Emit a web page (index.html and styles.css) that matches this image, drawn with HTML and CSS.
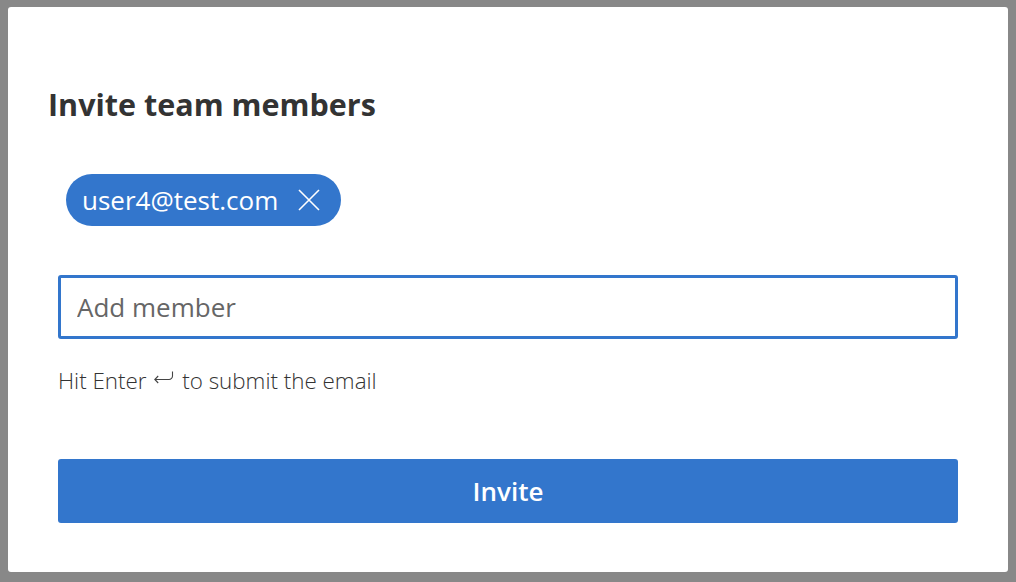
FILE: index.html
```html
<!DOCTYPE html>
<html lang="en">
<head>
<meta charset="utf-8">
<title>Invite team members</title>
<link rel="stylesheet" href="styles.css">
</head>
<body>
<div class="modal">
  <h1 class="title">Invite team members</h1>
  <div class="content">
    <div class="chips">
      <span class="chip">user4@test.com
        <svg class="chip-x" width="22" height="22" viewBox="0 0 22 22" aria-hidden="true"><path d="M1 1L21 21M21 1L1 21" stroke="#fff" stroke-width="1.6" fill="none"/></svg>
      </span>
    </div>
    <input class="field" type="text" placeholder="Add member">
    <p class="hint">Hit Enter <svg class="enter" width="20" height="13" viewBox="0 0 20 13" aria-hidden="true"><path d="M4.2 5L0.8 8.5L4.2 12M0.8 8.5H15A3.5 3.5 0 0 0 18.5 5V0.5" stroke="#444" stroke-width="1.1" fill="none"/></svg> to submit the email</p>
    <button class="btn">Invite</button>
  </div>
</div>
</body>
</html>
```
FILE: styles.css
```css
html, body {
  margin: 0;
  padding: 0;
}
body {
  background: #888888;
  width: 1016px;
  height: 582px;
  padding: 7px 8px 0 8px;
  box-sizing: border-box;
  font-family: "Open Sans", "Noto Sans", sans-serif;
  color: #333;
}
.modal {
  width: 1000px;
  height: 565px;
  background: #fff;
  border-radius: 3px;
  box-sizing: border-box;
}
.title {
  margin: 0;
  padding: 79px 0 0 40px;
  font-size: 30.5px;
  font-weight: 700;
  line-height: 36px;
  color: #333;
}
.content {
  padding: 0 50px;
}
.chips {
  display: flex;
  padding: 52px 0 0 8px;
}
.chip {
  display: inline-flex;
  align-items: center;
  height: 52px;
  border-radius: 26px;
  background: #3376cc;
  color: #fff;
  font-size: 26px;
  padding: 0 21px 0 16px;
  box-sizing: border-box;
  gap: 20px;
}
.chip-x {
  display: block;
}
.field {
  display: block;
  margin-top: 49px;
  width: 900px;
  height: 64px;
  box-sizing: border-box;
  border: 3px solid #3376cc;
  border-radius: 3px;
  padding: 0 16px;
  font-family: inherit;
  font-size: 26px;
  color: #333;
  outline: none;
}
.field::placeholder {
  color: #666;
}
.hint {
  margin: 28px 0 0 0;
  font-size: 22.4px;
  line-height: 28px;
  font-weight: 300;
  color: #333;
}
.enter {
  vertical-align: 5px;
  margin: 0 2px;
}
.btn {
  display: block;
  margin-top: 64px;
  width: 900px;
  height: 64px;
  border: none;
  border-radius: 3px;
  background: #3376cc;
  color: #fff;
  font-family: inherit;
  font-size: 26px;
  font-weight: 600;
  cursor: pointer;
}
```
